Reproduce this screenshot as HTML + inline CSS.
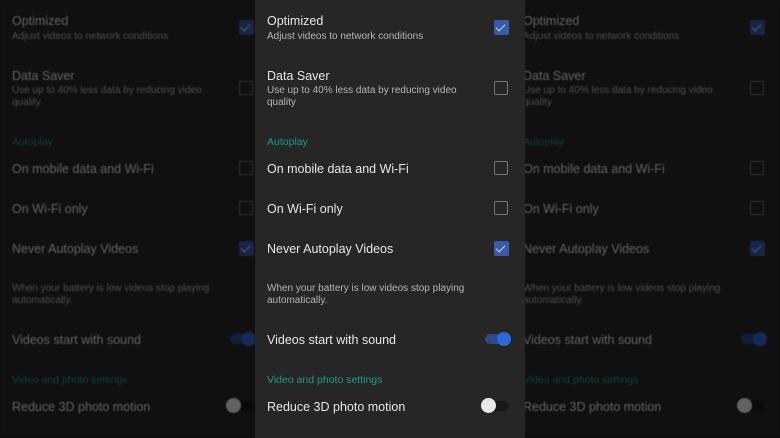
<!DOCTYPE html><html><head><style>
body{margin:0;width:780px;height:438px;overflow:hidden;background:#151515;font-family:"Liberation Sans",sans-serif;position:relative}
.p{position:absolute;top:0;width:270px;height:438px;background:#262626;overflow:hidden}
.p div{position:absolute;white-space:nowrap}
.t{font-size:12.5px;color:#e6e6e6;left:12px}
.s{font-size:10px;color:#b5b5b5;left:12px;line-height:12px}
.h{font-size:10.5px;color:#1f9a8a;left:12px}
.cb{left:239px;width:12px;height:12px;border:1.5px solid #777;border-radius:2px}
.ck{left:239px;width:15px;height:15px;background:#3a5aa8;border-radius:2px}
.ck:after{content:"";position:absolute;left:4px;top:2px;width:4px;height:8px;border:solid #c8d4ee;border-width:0 1.5px 1.5px 0;transform:rotate(45deg)}
.dim{filter:blur(0.4px)}
.ov{position:absolute;top:0;height:438px;background:rgba(0,0,0,.58)}
</style></head><body>
<div class="p dim" style="left:0;width:255px" id="a"></div>
<div class="p dim" style="left:511px;width:269px" id="b"></div>
<div class="ov" style="left:0;width:255px"></div>
<div class="ov" style="left:525px;width:255px"></div>
<div class="p" style="left:255px" id="c">
<div class="t" style="top:14px">Optimized</div>
<div class="s" style="top:31px">Adjust videos to network conditions</div>
<div class="ck" style="top:20px"></div>
<div class="t" style="top:69px">Data Saver</div>
<div class="s" style="top:85px">Use up to 40% less data by reducing video<br>quality</div>
<div class="cb" style="top:81px"></div>
<div class="h" style="top:136px">Autoplay</div>
<div class="t" style="top:162px">On mobile data and Wi-Fi</div>
<div class="cb" style="top:161px"></div>
<div class="t" style="top:202px">On Wi-Fi only</div>
<div class="cb" style="top:201px"></div>
<div class="t" style="top:242px">Never Autoplay Videos</div>
<div class="ck" style="top:241px"></div>
<div class="s" style="top:283px">When your battery is low videos stop playing<br>automatically.</div>
<div class="t" style="top:333px">Videos start with sound</div>
<div style="left:230px;top:334px;width:26px;height:10px;border-radius:5px;background:#2a4a8a"></div>
<div style="left:242px;top:332px;width:14px;height:14px;border-radius:7px;background:#2c68d8"></div>
<div class="h" style="top:374px">Video and photo settings</div>
<div class="t" style="top:400px">Reduce 3D photo motion</div>
<div style="left:228px;top:401px;width:26px;height:10px;border-radius:5px;background:#181818"></div>
<div style="left:226px;top:398px;width:15px;height:15px;border-radius:8px;background:#e8e8e8"></div>
</div>
<script>
var c=document.getElementById('c').innerHTML;
document.getElementById('a').innerHTML=c;document.getElementById('b').innerHTML=c;
</script>
</body></html>
